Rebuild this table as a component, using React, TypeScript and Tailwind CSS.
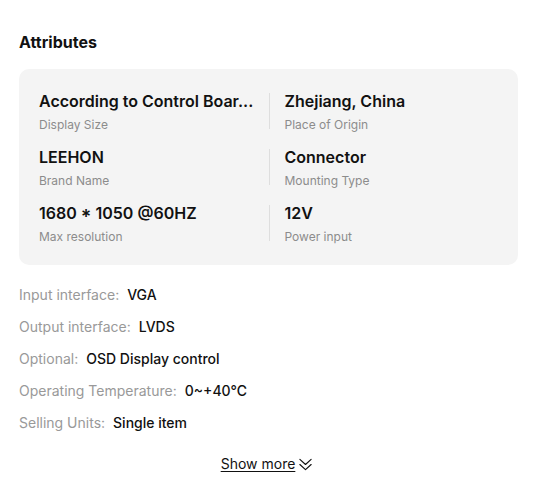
const attributes = [
  { value: "According to Control Boar...", label: "Display Size" },
  { value: "Zhejiang, China", label: "Place of Origin" },
  { value: "LEEHON", label: "Brand Name" },
  { value: "Connector", label: "Mounting Type" },
  { value: "1680 * 1050 @60HZ", label: "Max resolution" },
  { value: "12V", label: "Power input" },
];

const details = [
  { label: "Input interface:", value: "VGA" },
  { label: "Output interface:", value: "LVDS" },
  { label: "Optional:", value: "OSD Display control" },
  { label: "Operating Temperature:", value: "0~+40℃" },
  { label: "Selling Units:", value: "Single item" },
];

export default function App() {
  return (
    <div
      className="w-[534px] h-[502px] bg-white px-[19px] pt-[30px] text-[#111]"
      style={{ fontFamily: "Inter, 'Liberation Sans', sans-serif" }}
    >
      <h2 className="text-base font-bold leading-6">Attributes</h2>

      <div className="mt-[15px] w-[499px] rounded-[10px] bg-[#f4f4f4] px-5 py-5">
        <div className="grid grid-cols-2 gap-y-3">
          {attributes.map((item, i) => (
            <div
              key={item.label}
              className={
                i % 2 === 1
                  ? "flex flex-col min-w-0 pl-4 relative"
                  : "flex flex-col min-w-0 pr-2"
              }
            >
              {i % 2 === 1 && (
                <span className="absolute left-0 top-1 bottom-1 w-px bg-[#dedede]" />
              )}
              <strong className="text-base font-semibold leading-6 whitespace-nowrap">
                {item.value}
              </strong>
              <span className="mt-1 text-xs leading-4 text-[#8c8c8c]">
                {item.label}
              </span>
            </div>
          ))}
        </div>
      </div>

      <ul className="mt-5 flex flex-col gap-3">
        {details.map((d) => (
          <li key={d.label} className="flex h-5 items-center gap-2 text-sm leading-5">
            <span className="text-[#999]">{d.label}</span>
            <span className="font-medium text-[#111]">{d.value}</span>
          </li>
        ))}
      </ul>

      <div className="mt-[21px] flex justify-center">
        <button className="flex items-center gap-[3px] text-sm leading-5 text-[#111]">
          <span className="underline underline-offset-2">Show more</span>
          <svg
            width="15"
            height="15"
            viewBox="0 0 16 16"
            fill="none"
            stroke="currentColor"
            strokeWidth="1.2"
            strokeLinecap="round"
            strokeLinejoin="round"
          >
            <path d="M2 2.5l6 5.5 6-5.5" />
            <path d="M2 8l6 5.5 6-5.5" />
          </svg>
        </button>
      </div>
    </div>
  );
}
